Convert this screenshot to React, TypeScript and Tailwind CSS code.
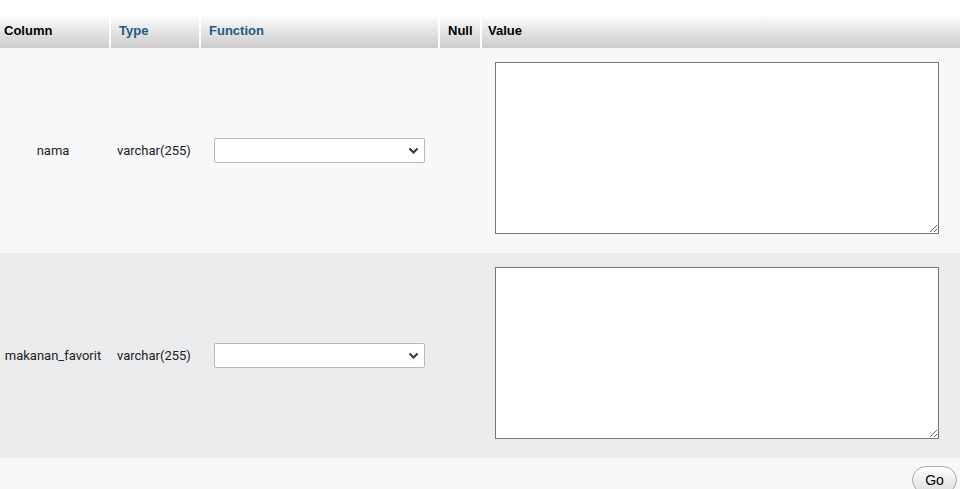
import React from 'react';

const rows = [
  { name: 'nama', type: 'varchar(255)' },
  { name: 'makanan_favorit', type: 'varchar(255)' },
];

export default function App() {
  return (
    <div className="w-[960px] h-[489px] overflow-hidden bg-white pt-[14px] font-['Roboto',sans-serif] text-[13px] text-[#222]">
      <table className="w-full table-fixed border-collapse">
        <colgroup>
          <col className="w-[110px]" />
          <col className="w-[90px]" />
          <col className="w-[239px]" />
          <col className="w-[42px]" />
          <col />
        </colgroup>
        <thead>
          <tr className="h-[34px] bg-gradient-to-b from-white to-[#cccccc] font-['Liberation_Sans',sans-serif] text-[13px] font-bold">
            <th className="border-r-2 border-white px-[4px] text-left text-black">Column</th>
            <th className="border-r-2 border-white px-[8px] text-left text-[#235a81]">Type</th>
            <th className="border-r-2 border-white px-[8px] text-left text-[#235a81]">Function</th>
            <th className="border-r-2 border-white px-[8px] text-left text-black">Null</th>
            <th className="px-[6px] text-left text-black">Value</th>
          </tr>
        </thead>
        <tbody>
          {rows.map((r, i) => (
            <tr key={r.name} className={i % 2 === 0 ? 'h-[205px] bg-[#f7f8fa]' : 'h-[205px] bg-[#ebecee]'}>
              <td className="px-[2px] pr-[6px] text-center">{r.name}</td>
              <td className="px-[7px]">{r.type}</td>
              <td className="px-[14px]">
                <div className="relative h-[25px] w-[211px] rounded-[2px] border border-[#b8b8b8] bg-white">
                  <svg className="absolute right-[5px] top-[7px]" width="11" height="9" viewBox="0 0 11 9">
                    <path d="M1.5 2.5 L5.5 6.5 L9.5 2.5" fill="none" stroke="#333" strokeWidth="2" />
                  </svg>
                </div>
              </td>
              <td></td>
              <td className="pl-[14px] pr-[21px] pt-[14px] align-top">
                <textarea className="block h-[172px] w-[444px] resize border border-[#767676] bg-white" />
              </td>
            </tr>
          ))}
          <tr className="h-[32px] bg-[#f7f8fa]">
            <td colSpan={5} className="pr-[3px] pt-[8px] text-right align-top">
              <button className="h-[28px] w-[45px] rounded-full border border-[#aaaaaa] bg-gradient-to-b from-white to-[#dddddd] font-['Liberation_Sans',sans-serif] text-[14px] text-black">
                Go
              </button>
            </td>
          </tr>
        </tbody>
      </table>
    </div>
  );
}
